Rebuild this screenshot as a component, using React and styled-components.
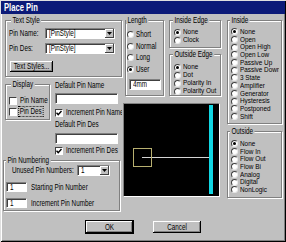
import React from "react";
import styled, { createGlobalStyle } from "styled-components";

const GlobalStyle = createGlobalStyle`
  html, body { margin: 0; padding: 0; background: #c0c0c0; }
  body { font-family: "Liberation Sans", Arial, sans-serif; font-size: 9px; color: #000; }
  * { box-sizing: border-box; }
`;

const Window = styled.div`
  width: 286px;
  height: 242px;
  padding: 1px;
  background: #c0c0c0;
  box-shadow: inset 1px 1px #dfdfdf, inset -1px -1px #000, inset 2px 2px #fff,
    inset -2px -2px #808080;
  display: flex;
  flex-direction: column;
  overflow: hidden;
`;

const TitleBar = styled.div`
  height: 13px;
  flex-shrink: 0;
  background: #0c1a78;
  color: #fff;
  font-weight: bold;
  display: flex;
  align-items: center;
  padding-left: 3px;
`;

// the dialog font is tall and narrow, so text gets squeezed horizontally
const Txt = styled.span`
  display: inline-block;
  flex-shrink: 0;
  white-space: nowrap;
  font-size: ${(p) => p.$fs || 9}px;
  line-height: ${(p) => p.$lh || 9}px;
  transform: scaleX(${(p) => p.$sx || 0.7});
  transform-origin: ${(p) => (p.$center ? "50% 50%" : "0 50%")};
`;

const FocusTxt = styled(Txt)`
  outline: 1px dotted #000;
  padding: 0 1px;
`;

const Body = styled.div`
  display: flex;
  align-items: flex-start;
  padding: 6px 0 0 4px;
`;

const Column = styled.div`
  display: flex;
  flex-direction: column;
  flex-shrink: 0;
  width: ${(p) => p.$w}px;
  margin-left: ${(p) => p.$ml || 0}px;
  overflow-x: ${(p) => (p.$clip ? "clip" : "visible")};
`;

const Group = styled.div`
  display: flex;
  flex-direction: column;
  flex-shrink: 0;
  width: ${(p) => p.$w}px;
  height: ${(p) => p.$h}px;
  margin: ${(p) => p.$mt || 0}px 0 0 ${(p) => p.$ml || 0}px;
  border: 1px solid #808080;
  box-shadow: inset 1px 1px #fff, 1px 1px #fff;
`;

const GroupTitle = styled.span`
  align-self: flex-start;
  display: inline-block;
  white-space: nowrap;
  line-height: 8px;
  margin: -5px 0 ${(p) => p.$mb || 0}px ${(p) => p.$x || 0}px;
  padding: 0 2px;
  background: #c0c0c0;
  transform: scaleX(0.7);
  transform-origin: 0 50%;
`;

const Row = styled.div`
  display: flex;
  align-items: center;
  flex-shrink: 0;
  height: ${(p) => p.$h || 9}px;
  margin-top: ${(p) => p.$mt || 0}px;
  padding-left: ${(p) => p.$pl || 0}px;
  gap: ${(p) => p.$gap || 0}px;
`;

const FlexRow = styled.div`
  display: flex;
  align-items: flex-start;
  margin-top: ${(p) => p.$mt || 0}px;
`;

const List = styled.div`
  display: flex;
  flex-direction: column;
  row-gap: ${(p) => p.$gap || 0}px;
  margin: ${(p) => p.$mt || 0}px ${(p) => p.$mr || 0}px 0 0;
  padding-left: ${(p) => p.$pl || 0}px;
  overflow-x: clip;
`;

const LabelCell = styled.span`
  width: ${(p) => p.$w}px;
  flex-shrink: 0;
  display: flex;
  align-items: center;
`;

const RadioDot = styled.span`
  width: 7px;
  height: 7px;
  flex-shrink: 0;
  border-radius: 50%;
  background: #fff;
  border: 1px solid;
  border-color: #404040 #e8e8e8 #e8e8e8 #404040;
  display: flex;
  align-items: center;
  justify-content: center;
  &::after {
    content: "";
    width: 3px;
    height: 3px;
    border-radius: 50%;
    background: ${(p) => (p.$on ? "#000" : "transparent")};
  }
`;

const CheckBox = styled.span`
  width: 8px;
  height: 8px;
  flex-shrink: 0;
  background: #fff;
  border: 1px solid;
  border-color: #404040 #fff #fff #404040;
  display: flex;
  align-items: center;
  justify-content: center;
`;

const TextBox = styled.div`
  width: ${(p) => p.$w}px;
  height: ${(p) => p.$h || 11}px;
  flex-shrink: 0;
  margin: ${(p) => p.$mt || 0}px 0 0 ${(p) => p.$ml || 0}px;
  background: #fff;
  border: 1px solid;
  border-color: #808080 #fff #fff #808080;
  box-shadow: inset 1px 1px #404040;
  display: flex;
  align-items: center;
  padding-left: 3px;
`;

const DropBtn = styled.span`
  margin-left: auto;
  width: 9px;
  height: 100%;
  flex-shrink: 0;
  background: #c0c0c0;
  box-shadow: inset -1px -1px #404040, inset 1px 1px #fff;
  display: flex;
  align-items: center;
  justify-content: center;
`;

const Button = styled.div`
  width: ${(p) => p.$w}px;
  height: 14px;
  flex-shrink: 0;
  margin-left: ${(p) => p.$ml || 0}px;
  background: #c0c0c0;
  border: 1px solid ${(p) => (p.$default ? "#000" : "transparent")};
  box-shadow: inset -1px -1px #000, inset 1px 1px #fff, inset -2px -2px #808080;
  display: flex;
  align-items: center;
  justify-content: center;
`;

const SmallButton = styled(Button)`
  height: 11px;
  border: none;
  margin: ${(p) => p.$mt || 0}px 0 0 ${(p) => p.$ml || 0}px;
`;

const Preview = styled.div`
  width: 97px;
  height: 94px;
  flex-shrink: 0;
  margin-top: 7px;
  background: #000;
  border: 1px solid;
  border-color: #808080 #fff #fff #808080;
  display: flex;
`;

const ButtonRow = styled.div`
  display: flex;
  margin-top: 9px;
`;

// tightly packed option lists use a slightly smaller face
function Radio({ on, children, h = 9, small }) {
  return (
    <Row $h={h} $gap={2}>
      <RadioDot $on={on} />
      {small ? (
        <Txt $fs={7.5} $sx={0.85} $lh={h}>{children}</Txt>
      ) : (
        <Txt $lh={h}>{children}</Txt>
      )}
    </Row>
  );
}

function Check({ on, children, focus }) {
  return (
    <>
      <CheckBox>
        {on && (
          <svg width="6" height="6" viewBox="0 0 6 6">
            <polyline points="0.5,2.8 2.2,4.6 5.5,1" fill="none" stroke="#000" strokeWidth="1.4" />
          </svg>
        )}
      </CheckBox>
      {focus ? <FocusTxt>{children}</FocusTxt> : <Txt>{children}</Txt>}
    </>
  );
}

function Combo({ w, value }) {
  return (
    <TextBox $w={w}>
      <Txt>{value}</Txt>
      <DropBtn>
        <svg width="5" height="3" viewBox="0 0 5 3">
          <polygon points="0,0 5,0 2.5,3" fill="#000" />
        </svg>
      </DropBtn>
    </TextBox>
  );
}

const insideOptions = [
  "None", "Open", "Open High", "Open Low", "Passive Up", "Passive Down",
  "3 State", "Amplifier", "Generator", "Hysteresis", "Postponed", "Shift",
];
const outsideOptions = ["None", "Flow In", "Flow Out", "Flow Bi", "Analog", "Digital", "NonLogic"];

export default function App() {
  return (
    <Window>
      <GlobalStyle />
      <TitleBar>
        <Txt $fs={10} $sx={0.76}>Place Pin</Txt>
      </TitleBar>
      <Body>
        <Column $w={117}>
          <Group $w={117} $h={57}>
            <GroupTitle $x={5}>Text Style</GroupTitle>
            <Row $h={11} $mt={4} $pl={3}>
              <LabelCell $w={36}><Txt>Pin Name:</Txt></LabelCell>
              <Combo w={70} value="[PinStyle]" />
            </Row>
            <Row $h={11} $mt={4} $pl={3}>
              <LabelCell $w={36}><Txt>Pin Des:</Txt></LabelCell>
              <Combo w={70} value="[PinStyle]" />
            </Row>
            <SmallButton $w={43} $mt={7} $ml={4}>
              <Txt $center>Text Styles...</Txt>
            </SmallButton>
          </Group>

          <FlexRow $mt={4}>
            <Group $w={45} $h={36} $mt={3}>
              <GroupTitle $x={5}>Display</GroupTitle>
              <Row $mt={8} $pl={3} $gap={3}>
                <Check>Pin Name</Check>
              </Row>
              <Row $mt={2} $pl={3} $gap={2}>
                <Check focus>Pin Des</Check>
              </Row>
            </Group>
            <Column $w={67} $ml={5} $clip>
              <Row><Txt>Default Pin Name</Txt></Row>
              <TextBox $w={63} $mt={3} />
              <Row $mt={4} $gap={3}>
                <Check on>Increment Pin Name</Check>
              </Row>
              <Row $mt={3}><Txt>Default Pin Des</Txt></Row>
              <TextBox $w={63} $mt={4} />
              <Row $mt={2} $gap={3}>
                <Check on>Increment Pin Des</Check>
              </Row>
            </Column>
          </FlexRow>

          <Group $w={117} $h={51} $mt={5} $ml={-2}>
            <GroupTitle $x={2} $mb={-3}>Pin Numbering</GroupTitle>
            <Row $h={11} $mt={4} $pl={8}>
              <LabelCell $w={65}><Txt $lh={7}>Unused Pin Numbers:</Txt></LabelCell>
              <Combo w={33} value="1" />
            </Row>
            <Row $h={10} $mt={6} $pl={2} $gap={4}>
              <TextBox $w={21} $h={10}><Txt>1</Txt></TextBox>
              <Txt>Starting Pin Number</Txt>
            </Row>
            <Row $h={10} $mt={6} $pl={2} $gap={4}>
              <TextBox $w={21} $h={10}><Txt>1</Txt></TextBox>
              <Txt>Increment Pin Number</Txt>
            </Row>
          </Group>
        </Column>

        <Column $w={98} $ml={1}>
          <FlexRow>
            <Group $w={39} $h={76} $ml={2}>
              <GroupTitle $x={0}>Length</GroupTitle>
              <List $mt={6} $gap={2.7} $pl={1}>
                <Radio>Short</Radio>
                <Radio>Normal</Radio>
                <Radio>Long</Radio>
                <Radio on>User</Radio>
              </List>
              <TextBox $w={32} $mt={5} $ml={3}><Txt>4mm</Txt></TextBox>
            </Group>
            <Column $w={52} $ml={5}>
              <Group $w={52} $h={28}>
                <GroupTitle $x={3}>Inside Edge</GroupTitle>
                <List $mt={4} $pl={4}>
                  <Radio on h={8} small>None</Radio>
                  <Radio h={8} small>Clock</Radio>
                </List>
              </Group>
              <Group $w={52} $h={42} $mt={6}>
                <GroupTitle $x={3}>Outside Edge</GroupTitle>
                <List $mt={5} $pl={4}>
                  <Radio on h={8} small>None</Radio>
                  <Radio h={8} small>Dot</Radio>
                  <Radio h={8} small>Polarity In</Radio>
                  <Radio h={8} small>Polarity Out</Radio>
                </List>
              </Group>
            </Column>
          </FlexRow>
          <Preview>
            <svg width="95" height="92" viewBox="0 0 95 92">
              <rect x="85" y="1" width="4" height="89" fill="#12d6e2" />
              <line x1="18" y1="53.5" x2="85" y2="53.5" stroke="#d4d4d4" strokeWidth="1" />
              <rect x="9.5" y="44.5" width="18" height="18" fill="none" stroke="#b8b070" strokeWidth="1" />
            </svg>
          </Preview>
        </Column>

        <Column $w={55} $ml={6}>
          <Group $w={55} $h={104}>
            <GroupTitle $x={2}>Inside</GroupTitle>
            <List $mt={4} $pl={3} $mr={2}>
              {insideOptions.map((o, i) => (
                <Radio key={o} on={i === 0} h={7.7} small>{o}</Radio>
              ))}
            </List>
          </Group>
          <Group $w={55} $h={67} $mt={7}>
            <GroupTitle $x={2}>Outside</GroupTitle>
            <List $mt={5} $pl={3} $mr={2}>
              {outsideOptions.map((o, i) => (
                <Radio key={o} on={i === 0} h={7.7} small>{o}</Radio>
              ))}
            </List>
          </Group>
        </Column>
      </Body>

      <ButtonRow>
        <Button $w={49} $ml={84} $default>
          <Txt $center>OK</Txt>
        </Button>
        <Button $w={50} $ml={18}>
          <Txt $center>Cancel</Txt>
        </Button>
      </ButtonRow>
    </Window>
  );
}
